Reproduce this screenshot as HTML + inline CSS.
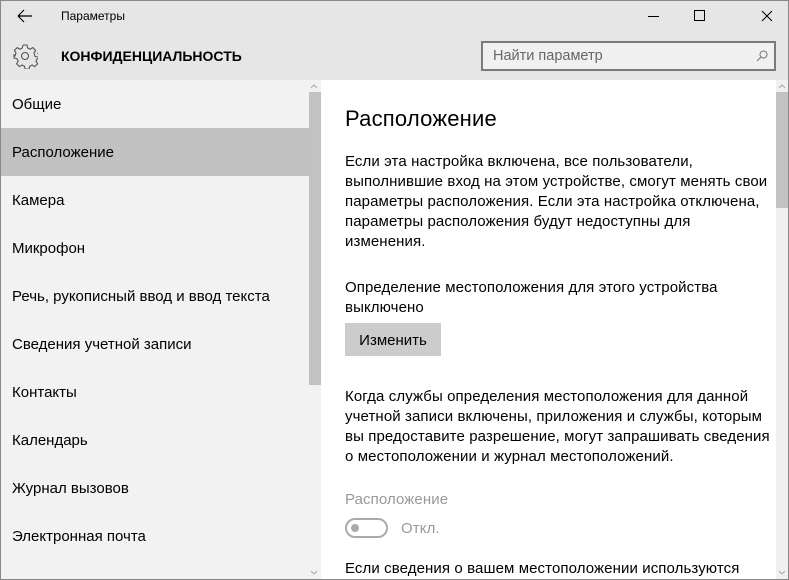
<!DOCTYPE html>
<html><head><meta charset="utf-8"><style>
*{margin:0;padding:0;box-sizing:border-box}
body{width:789px;height:580px;overflow:hidden;font-family:"Liberation Sans","Noto Sans CJK SC",sans-serif;background:#fff;position:relative;color:#000}
.win{position:absolute;left:0;top:0;width:789px;height:580px;border:1px solid #888;}
.title{position:absolute;left:0;top:0;width:789px;height:80px;background:#e6e6e6;}
.t{position:absolute;font-size:12px;left:61px;top:9px;color:#000}
.h{position:absolute;left:61px;top:48px;font-size:14px;font-weight:bold}
.search{position:absolute;left:481px;top:41px;width:295px;height:30px;border:2px solid #7a7a7a;background:#f0f0f0;font-size:14.5px;color:#666;padding:5px 10px}
.left{position:absolute;left:1px;top:80px;width:320px;height:499px;background:#f2f2f2}
.item{position:absolute;left:0;width:308px;height:48px;font-size:15px;padding-left:11px;line-height:50px}
.sel{background:#c1c1c1}
.sb{position:absolute;background:#c2c2c2}
.right{position:absolute;left:321px;top:80px;width:467px;height:499px;background:#fff}
.p{position:absolute;left:345px;font-size:15px;letter-spacing:0.1px;line-height:20px;color:#000;white-space:nowrap}
</style></head><body>
<div class="title"></div>
<svg style="position:absolute;left:17px;top:9px" width="16" height="14"><path d="M1 7H15M1 7L7 1M1 7L7 13" stroke="#000" stroke-width="1.2" fill="none"/></svg>
<div class="t">Параметры</div>
<svg style="position:absolute;left:648px;top:8px" width="130" height="16"><path d="M0 8.5H11" stroke="#000"/><path d="M46.5 2.5h10v10h-10z" stroke="#000" fill="none"/><path d="M114 3l10 10M124 3l-10 10" stroke="#000"/></svg>
<svg style="position:absolute;left:12px;top:43px" width="26" height="26" viewBox="0 0 26 26"><g fill="none" stroke="#555" stroke-width="1.1"><circle cx="13" cy="13" r="3.5"/><path d="M11 2h4l.7 3 2.4 1.2 2.7-1.6 2.8 2.8-1.6 2.7L23 13.5l3 .5v0M11 2l-.7 3-2.4 1.2-2.7-1.6-2.8 2.8 1.6 2.7L3 13l-1 .2v0"/><path d="M2 11v4l3 .7 1.2 2.4-1.6 2.7 2.8 2.8 2.7-1.6 2.4 1.2.5 3h4l.7-3 2.4-1.2 2.7 1.6 2.8-2.8-1.6-2.7 1.2-2.4 3-.7v-4l-3-.7"/></g></svg>
<div class="h">КОНФИДЕНЦИАЛЬНОСТЬ</div>
<div class="search">Найти параметр<svg style="position:absolute;right:6px;top:7px" width="12" height="12"><circle cx="7.5" cy="4.5" r="3.5" stroke="#777" fill="none"/><path d="M5 7L1 11" stroke="#777"/></svg></div>
<div class="left">
<div class="item" style="top:0">Общие</div>
<div class="item sel" style="top:48px">Расположение</div>
<div class="item" style="top:96px">Камера</div>
<div class="item" style="top:144px">Микрофон</div>
<div class="item" style="top:192px">Речь, рукописный ввод и ввод текста</div>
<div class="item" style="top:240px">Сведения учетной записи</div>
<div class="item" style="top:288px">Контакты</div>
<div class="item" style="top:336px">Календарь</div>
<div class="item" style="top:384px">Журнал вызовов</div>
<div class="item" style="top:432px">Электронная почта</div>
<div class="sb" style="left:308px;top:12px;width:12px;height:293px"></div>
</div>
<div class="right"></div>
<div style="position:absolute;left:776px;top:80px;width:12px;height:499px;background:#f0f0f0"></div>
<div class="sb" style="left:776px;top:92px;width:12px;height:116px"></div>
<svg style="position:absolute;left:0;top:0" width="789" height="580"><g stroke="#aaa" fill="none"><path d="M311 88l3-3 3 3M779 88l3-3 3 3M311 571l3 3 3-3M779 571l3 3 3-3"/></g></svg>
<div class="p" style="top:105px;font-size:22px;line-height:28px;letter-spacing:0.2px">Расположение</div>
<div class="p" style="top:152px">Если эта настройка включена, все пользователи,<br>выполнившие вход на этом устройстве, смогут менять свои<br>параметры расположения. Если эта настройка отключена,<br>параметры расположения будут недоступны для<br>изменения.</div>
<div class="p" style="top:278px">Определение местоположения для этого устройства<br>выключено</div>
<div style="position:absolute;left:345px;top:323px;width:96px;height:33px;background:#ccc;font-size:15px;line-height:36px;text-align:center">Изменить</div>
<div class="p" style="top:387px">Когда службы определения местоположения для данной<br>учетной записи включены, приложения и службы, которым<br>вы предоставите разрешение, могут запрашивать сведения<br>о местоположении и журнал местоположений.</div>
<div class="p" style="top:490px;color:#999">Расположение</div>
<div style="position:absolute;left:345px;top:518px;width:43px;height:20px;border:2px solid #aaa;border-radius:10px"><div style="position:absolute;left:4px;top:4px;width:8px;height:8px;border-radius:50%;background:#aaa"></div></div>
<div class="p" style="top:519px;left:401px;color:#999">Откл.</div>
<div class="p" style="top:559px">Если сведения о вашем местоположении используются</div>
<div class="win"></div>
</body></html>
